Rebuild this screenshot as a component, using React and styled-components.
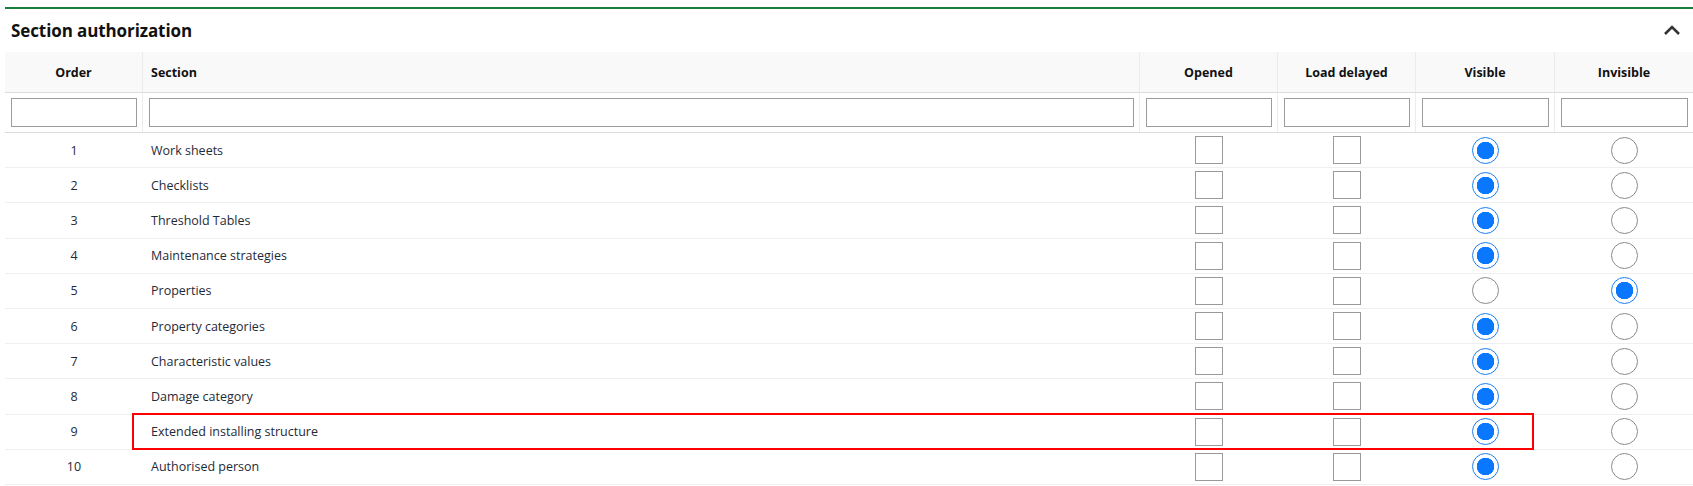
import styled, { createGlobalStyle } from "styled-components";

const GlobalStyle = createGlobalStyle`
  html, body {
    margin: 0;
    padding: 0;
    background: #ffffff;
  }
  body {
    font-family: "Open Sans", "Noto Sans", "Liberation Sans", sans-serif;
    color: #222;
  }
`;

const Panel = styled.section`
  position: relative;
  margin: 7px 0 0 5px;
  width: 1688px;
  border-top: 2px solid #1c7c3e;
`;

const TitleBar = styled.div`
  height: 43px;
  display: flex;
  align-items: center;
  justify-content: space-between;
  padding: 0 12px 1px 6px;
  box-sizing: border-box;

  h2 {
    margin: 0;
    font-size: 17px;
    font-weight: 700;
    color: #111;
    letter-spacing: -0.1px;
  }
`;

const Grid = styled.div`
  display: grid;
  grid-template-columns: 138px 1fr 138px 138px 139px 138px;
  align-items: stretch;
`;

const HeadRow = styled(Grid)`
  height: 41px;
  background: #f9f9f9;
  border-bottom: 1px solid #dcdcdc;
  box-sizing: border-box;
`;

const HeadCell = styled.div`
  display: flex;
  align-items: center;
  justify-content: ${(p) => (p.$left ? "flex-start" : "center")};
  padding-left: ${(p) => (p.$left ? "8px" : "0")};
  font-size: 12.5px;
  font-weight: 700;
  color: #111;
  border-right: 1px solid #ececec;
  &:last-child {
    border-right: none;
  }
`;

const FilterRow = styled(Grid)`
  height: 40px;
  border-bottom: 1px solid #dcdcdc;
  box-sizing: border-box;
`;

const FilterCell = styled.div`
  display: flex;
  align-items: center;
  padding: 0 5px 0 6px;
  border-right: 1px solid #ececec;
  &:last-child {
    border-right: none;
  }
`;

const FilterInput = styled.input`
  width: 100%;
  height: 29px;
  box-sizing: border-box;
  border: 1px solid #9c9c9c;
  border-radius: 0;
  background: #fff;
  outline: none;
`;

const Body = styled.div`
  position: relative;
`;

const Row = styled(Grid)`
  height: 35.2px;
  border-bottom: 1px solid #efefef;
  box-sizing: border-box;
`;

const Cell = styled.div`
  display: flex;
  align-items: center;
  justify-content: ${(p) => (p.$left ? "flex-start" : "center")};
  padding-left: ${(p) => (p.$left ? "8px" : "0")};
  font-size: 12.5px;
  color: #1f2a38;
`;

const Check = styled.span`
  width: 28px;
  height: 28px;
  box-sizing: border-box;
  border: 1.5px solid #9a9a9a;
  background: #fff;
`;

const Radio = styled.span`
  width: 27px;
  height: 27px;
  box-sizing: border-box;
  border-radius: 50%;
  border: 1.5px solid ${(p) => (p.$on ? "#1a7ef5" : "#8a8a8a")};
  background: ${(p) =>
    p.$on ? "radial-gradient(circle, #0a77ff 0 8.5px, #fff 9px)" : "#fff"};
`;

const Highlight = styled.div`
  position: absolute;
  left: 127px;
  top: 280px;
  width: 1402px;
  height: 37px;
  box-sizing: border-box;
  border: 2px solid #ff0000;
  pointer-events: none;
`;

const Chevron = () => (
  <svg width="18" height="12" viewBox="0 0 18 12">
    <polyline
      points="2,10 9,3 16,10"
      fill="none"
      stroke="#333"
      strokeWidth="2.6"
      strokeLinecap="butt"
    />
  </svg>
);

const sections = [
  ["Work sheets", true],
  ["Checklists", true],
  ["Threshold Tables", true],
  ["Maintenance strategies", true],
  ["Properties", false],
  ["Property categories", true],
  ["Characteristic values", true],
  ["Damage category", true],
  ["Extended installing structure", true],
  ["Authorised person", true],
];

export default function App() {
  return (
    <>
      <GlobalStyle />
      <Panel>
        <TitleBar>
          <h2>Section authorization</h2>
          <Chevron />
        </TitleBar>
        <HeadRow>
          <HeadCell>Order</HeadCell>
          <HeadCell $left>Section</HeadCell>
          <HeadCell>Opened</HeadCell>
          <HeadCell>Load delayed</HeadCell>
          <HeadCell>Visible</HeadCell>
          <HeadCell>Invisible</HeadCell>
        </HeadRow>
        <FilterRow>
          {[0, 1, 2, 3, 4, 5].map((i) => (
            <FilterCell key={i}>
              <FilterInput />
            </FilterCell>
          ))}
        </FilterRow>
        <Body>
          {sections.map(([name, visible], i) => (
            <Row key={name}>
              <Cell>{i + 1}</Cell>
              <Cell $left>{name}</Cell>
              <Cell>
                <Check />
              </Cell>
              <Cell>
                <Check />
              </Cell>
              <Cell>
                <Radio $on={visible} />
              </Cell>
              <Cell>
                <Radio $on={!visible} />
              </Cell>
            </Row>
          ))}
          <Highlight />
        </Body>
      </Panel>
    </>
  );
}
